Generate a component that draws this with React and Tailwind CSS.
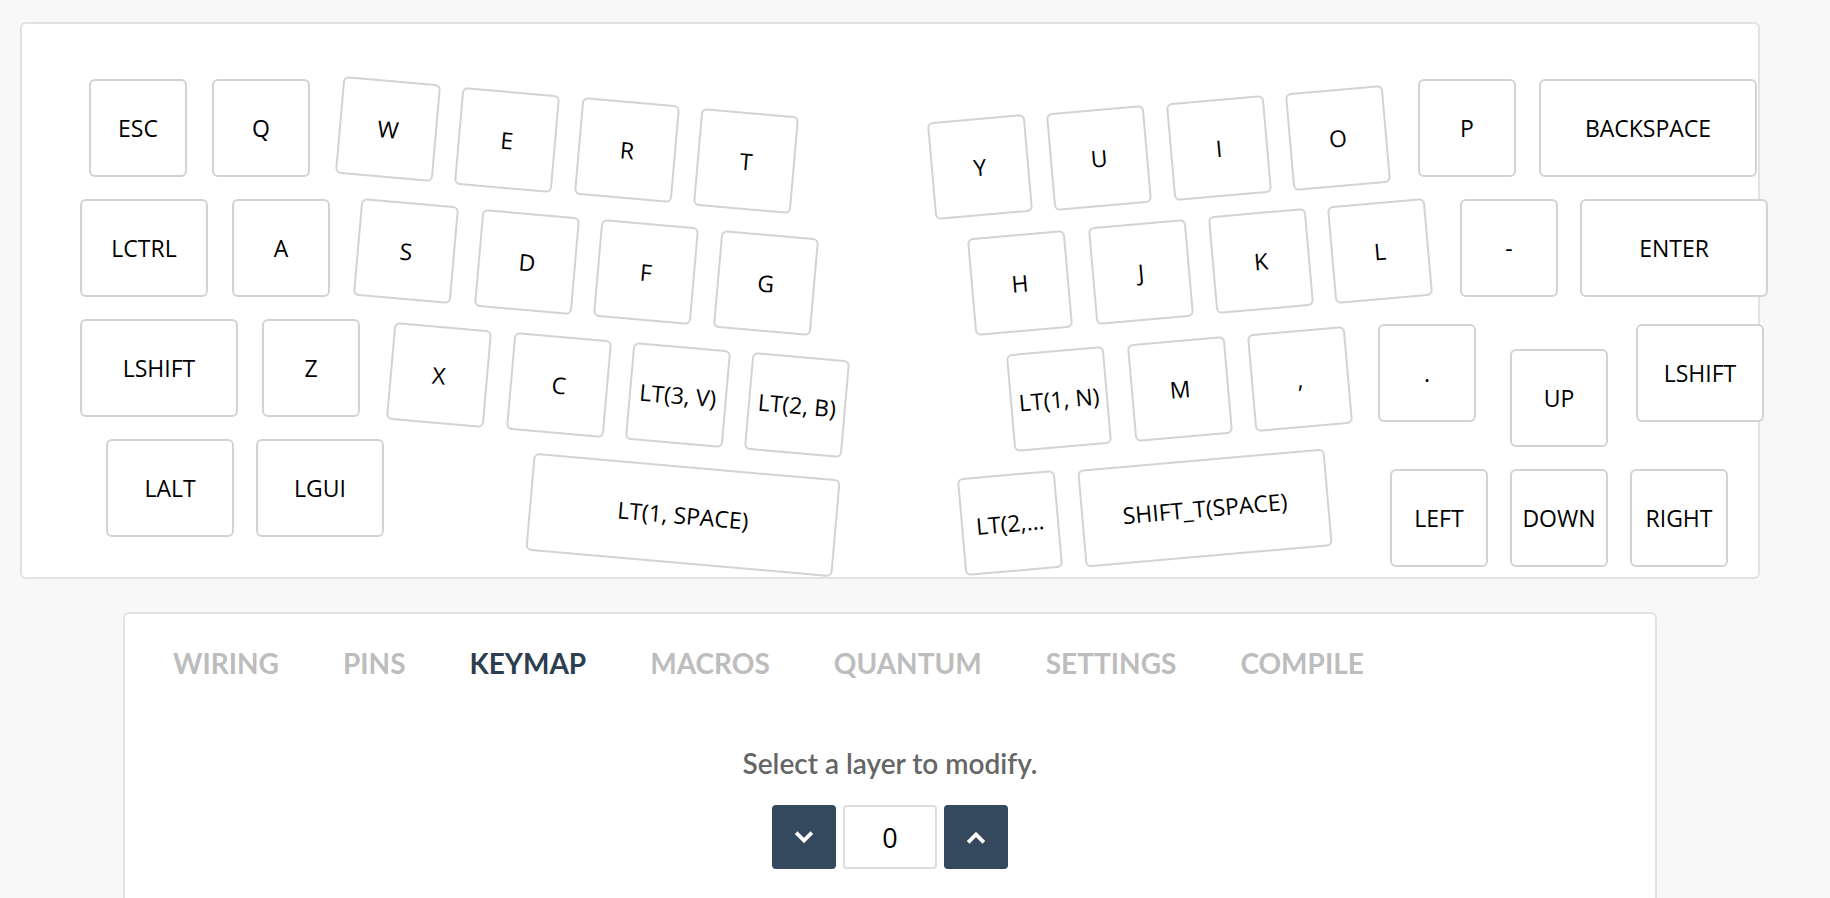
const KEYS = [
  // label, centre x, centre y, width, rotation
  ["ESC", 138, 128, 98, 0],
  ["Q", 261, 128, 98, 0],
  ["W", 388, 129, 98, 5],
  ["E", 507, 140, 98, 5],
  ["R", 627, 150, 98, 5],
  ["T", 746, 161, 98, 5],
  ["LCTRL", 144, 248, 128, 0],
  ["A", 281, 248, 98, 0],
  ["S", 406, 251, 98, 5],
  ["D", 527, 262, 98, 5],
  ["F", 646, 272, 98, 5],
  ["G", 766, 283, 98, 5],
  ["LSHIFT", 159, 368, 158, 0],
  ["Z", 311, 368, 98, 0],
  ["X", 439, 375, 98, 5],
  ["C", 559, 385, 98, 5],
  ["LT(3, V)", 678, 395, 98, 5],
  ["LT(2, B)", 797, 405, 98, 5],
  ["LALT", 170, 488, 128, 0],
  ["LGUI", 320, 488, 128, 0],
  ["LT(1, SPACE)", 683, 515, 308, 5],

  ["Y", 980, 167, 98, -5],
  ["U", 1099, 158, 98, -5],
  ["I", 1219, 148, 98, -5],
  ["O", 1338, 138, 98, -5],
  ["P", 1467, 128, 98, 0],
  ["BACKSPACE", 1648, 128, 218, 0],
  ["H", 1020, 283, 98, -5],
  ["J", 1141, 272, 98, -5],
  ["K", 1261, 261, 98, -5],
  ["L", 1380, 251, 98, -5],
  ["-", 1509, 248, 98, 0],
  ["ENTER", 1674, 248, 188, 0],
  ["LT(1, N)", 1059, 399, 98, -5],
  ["M", 1180, 389, 98, -5],
  [",", 1300, 379, 98, -5],
  [".", 1427, 373, 98, 0],
  ["UP", 1559, 398, 98, 0],
  ["LSHIFT", 1700, 373, 128, 0],
  ["LT(2,…", 1010, 523, 98, -5],
  ["SHIFT_T(SPACE)", 1205, 508, 248, -5],
  ["LEFT", 1439, 518, 98, 0],
  ["DOWN", 1559, 518, 98, 0],
  ["RIGHT", 1679, 518, 98, 0],
];

const TABS = ["WIRING", "PINS", "KEYMAP", "MACROS", "QUANTUM", "SETTINGS", "COMPILE"];

function Key({ label, cx, cy, w, r }) {
  return (
    <div
      className="absolute h-[98px] flex items-center justify-center bg-white border-2 border-[#d3d3d3] rounded-md text-[23px] text-black whitespace-nowrap font-['Open_Sans',sans-serif]"
      style={{
        left: cx - w / 2 - 22,
        top: cy - 49 - 24,
        width: w,
        transform: `rotate(${r}deg)`,
      }}
    >
      {label}
    </div>
  );
}

function Chevron({ up }) {
  return (
    <svg width="20" height="13" viewBox="0 0 20 13" fill="none">
      <polyline
        points={up ? "3.5,10 10,3.5 16.5,10" : "3.5,3 10,9.5 16.5,3"}
        stroke="white"
        strokeWidth="3.8"
        strokeLinecap="square"
      />
    </svg>
  );
}

export default function App() {
  return (
    <div className="min-h-screen bg-[#f8f8f8] pt-[22px] overflow-hidden font-['Lato',sans-serif]">
      <div className="w-[1780px]">
        <div className="relative ml-[20px] w-[1740px] h-[557px] bg-white border-2 border-[#e2e2e2] rounded-md">
          {KEYS.map(([label, cx, cy, w, r], i) => (
            <Key key={i} label={label} cx={cx} cy={cy} w={w} r={r} />
          ))}
        </div>

        <div className="mt-[33px] ml-[123px] w-[1534px] h-[320px] bg-white border-2 border-[#e2e2e2] rounded-md">
          <div className="flex gap-[64px] pl-[48px] pt-[35px]">
            {TABS.map((t) => (
              <span
                key={t}
                className={`text-[28px] leading-none font-bold ${t === "KEYMAP" ? "text-[#2c3e50]" : "text-[#bdbdbd]"}`}
              >
                {t}
              </span>
            ))}
          </div>

          <p className="mt-[72px] text-center text-[28px] leading-none font-semibold text-[#666666]">
            Select a layer to modify.
          </p>

          <div className="mt-[28px] flex justify-center gap-[7px]">
            <button className="w-[64px] h-[64px] flex items-center justify-center bg-[#34495e] rounded">
              <Chevron />
            </button>
            <input
              readOnly
              value="0"
              className="w-[94px] h-[64px] text-center text-[27px] text-black bg-white border-2 border-[#dddddd] rounded font-['Open_Sans',sans-serif] outline-none"
            />
            <button className="w-[64px] h-[64px] flex items-center justify-center bg-[#34495e] rounded">
              <Chevron up />
            </button>
          </div>
        </div>
      </div>
    </div>
  );
}
